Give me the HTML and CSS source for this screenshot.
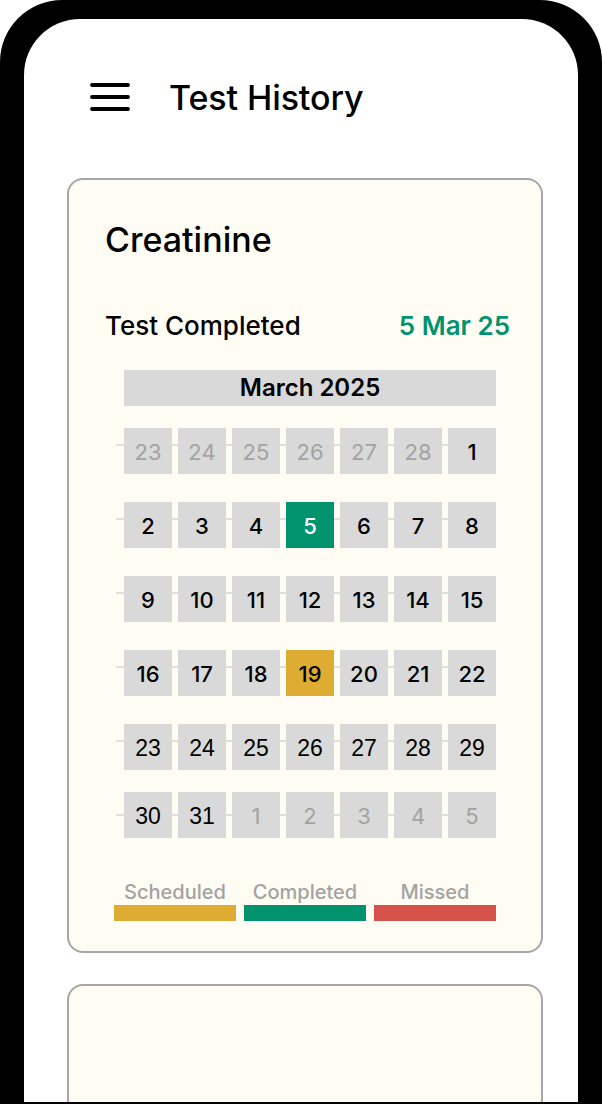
FILE: index.html
```html
<!DOCTYPE html>
<html lang="en">
<head>
<meta charset="utf-8">
<title>Test History</title>
<link rel="stylesheet" href="styles.css">
</head>
<body>
<div class="phone">
  <div class="screen">
    <header class="header">
      <svg class="menu" width="40" height="28" viewBox="0 0 40 28" aria-hidden="true">
        <line x1="2" y1="2" x2="38" y2="2"/>
        <line x1="2" y1="14" x2="38" y2="14"/>
        <line x1="2" y1="26" x2="38" y2="26"/>
      </svg>
      <h1 class="title">Test History</h1>
    </header>

    <main class="cards">
      <section class="card">
        <h2 class="card-title">Creatinine</h2>
        <div class="status">
          <span class="status-label">Test Completed</span>
          <span class="status-date">5 Mar 25</span>
        </div>

        <div class="calendar">
          <div class="month">March 2025</div>
          <div class="week">
            <div class="day out">23</div><div class="day out">24</div><div class="day out">25</div><div class="day out">26</div><div class="day out">27</div><div class="day out">28</div><div class="day">1</div>
          </div>
          <div class="week">
            <div class="day">2</div><div class="day">3</div><div class="day">4</div><div class="day done">5</div><div class="day">6</div><div class="day">7</div><div class="day">8</div>
          </div>
          <div class="week">
            <div class="day">9</div><div class="day">10</div><div class="day">11</div><div class="day">12</div><div class="day">13</div><div class="day">14</div><div class="day">15</div>
          </div>
          <div class="week">
            <div class="day">16</div><div class="day">17</div><div class="day">18</div><div class="day sched">19</div><div class="day">20</div><div class="day">21</div><div class="day">22</div>
          </div>
          <div class="week alt">
            <div class="day">23</div><div class="day">24</div><div class="day">25</div><div class="day">26</div><div class="day">27</div><div class="day">28</div><div class="day">29</div>
          </div>
          <div class="week last">
            <div class="day alt">30</div><div class="day alt">31</div><div class="day out">1</div><div class="day out">2</div><div class="day out">3</div><div class="day out">4</div><div class="day out">5</div>
          </div>
        </div>

        <div class="legend">
          <div class="legend-item"><span class="legend-label">Scheduled</span><span class="legend-bar sched-bar"></span></div>
          <div class="legend-item"><span class="legend-label">Completed</span><span class="legend-bar done-bar"></span></div>
          <div class="legend-item"><span class="legend-label">Missed</span><span class="legend-bar miss-bar"></span></div>
        </div>
      </section>

      <section class="card card-empty"></section>
    </main>
  </div>
</div>
</body>
</html>
```

FILE: styles.css
```css
* { box-sizing: border-box; }

html, body {
  margin: 0;
  padding: 0;
  background: #ffffff;
}

body {
  font-family: Inter, "Noto Sans", "DejaVu Sans", sans-serif;
  color: #000;
}

.phone {
  width: 602px;
  height: 1104px;
  background: #000;
  border-radius: 62px 62px 0 0;
  padding: 19px 24px 2px 24px;
  overflow: hidden;
}

.screen {
  background: #fff;
  height: 100%;
  border-radius: 56px 56px 0 0;
  overflow: hidden;
}

.header {
  height: 156px;
  display: flex;
  align-items: center;
  padding-left: 66px;
  gap: 39px;
}

.menu line {
  stroke: #000;
  stroke-width: 3.8;
  stroke-linecap: round;
}

.menu {
  display: block;
  flex: none;
}

.title {
  margin: 0;
  font-size: 34px;
  font-weight: 500;
  line-height: 40px;
  letter-spacing: -0.1px;
  padding-top: 2px;
}

.cards {
  padding-top: 3px;
  display: flex;
  flex-direction: column;
  gap: 31px;
}

.card {
  margin-left: 43px;
  width: 476px;
  background: #fffcf4;
  border: 2px solid #a6a6a6;
  border-radius: 16px;
  padding: 40px 31px 30px 36px;
}

.card-title {
  margin: 0;
  font-size: 34px;
  font-weight: 500;
  line-height: 40px;
}

.status {
  margin-top: 50px;
  display: flex;
  justify-content: space-between;
  align-items: baseline;
  font-size: 26px;
  line-height: 32px;
}

.status-label {
  font-weight: 500;
}

.status-date {
  font-weight: 600;
  color: #00936e;
}

.calendar {
  margin: 28px 14px 0 19px;
}

.month {
  height: 36px;
  line-height: 36px;
  background: #d9d9d9;
  text-align: center;
  font-size: 24px;
  font-weight: 600;
}

.week {
  position: relative;
  margin-top: 28px;
  display: grid;
  grid-template-columns: repeat(7, 48px);
  gap: 6px;
}

.month + .week {
  margin-top: 22px;
}

.week.last {
  margin-top: 22px;
}

.week::before {
  content: "";
  position: absolute;
  left: -8px;
  right: 0;
  top: 16px;
  height: 2px;
  background: #e0e0e0;
}

.week.last::before {
  top: 22px;
}

.day {
  position: relative;
  height: 46px;
  background: #d9d9d9;
  display: flex;
  align-items: center;
  justify-content: center;
  padding-top: 2px;
  font-size: 22px;
  font-weight: 500;
  color: #000;
}

.week.alt .day,
.day.alt {
  font-family: "Liberation Sans", Arial, sans-serif;
  font-weight: 400;
  font-size: 23px;
}

.day.out {
  color: #a3a3a3;
  font-weight: 400;
}

.day.done {
  background: #00936e;
  color: #fff;
}

.day.sched {
  background: #deab33;
}

.legend {
  margin: 42px 14px 0 9px;
  display: grid;
  grid-template-columns: repeat(3, 1fr);
  gap: 8px;
}

.legend-item {
  display: flex;
  flex-direction: column;
  align-items: center;
  gap: 1px;
}

.legend-label {
  font-size: 20px;
  line-height: 24px;
  font-weight: 500;
  color: #a3a3a3;
}

.legend-bar {
  display: block;
  width: 100%;
  height: 16px;
}

.sched-bar { background: #deab33; }
.done-bar { background: #00936e; }
.miss-bar { background: #d4524a; }

.card-empty {
  height: 400px;
  flex: none;
}
```
